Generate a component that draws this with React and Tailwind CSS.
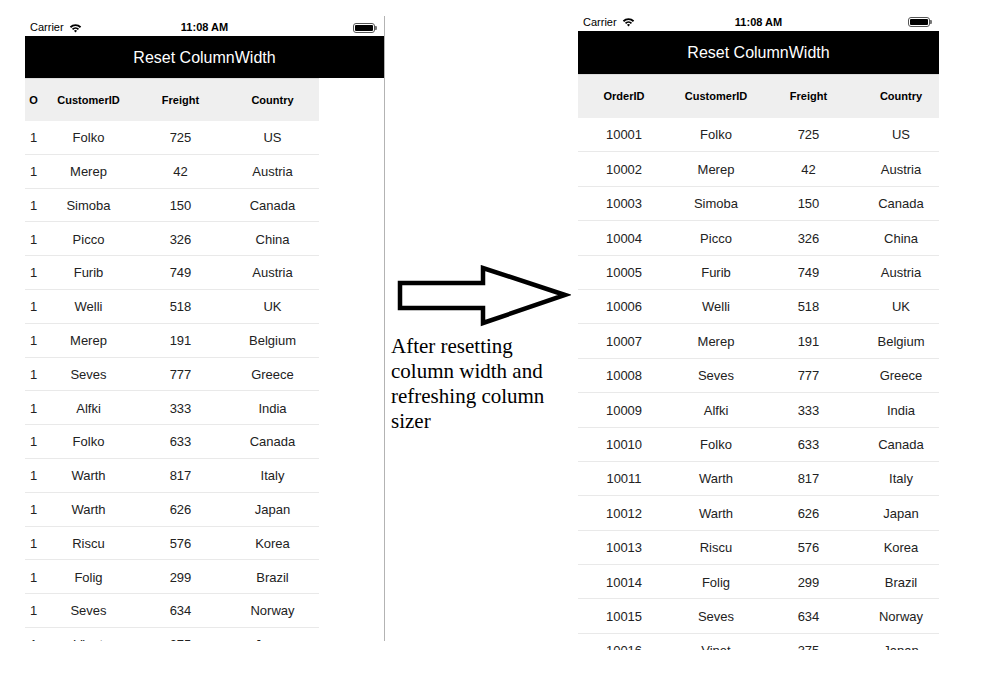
import React from 'react';

const rows = [
  ['10001', 'Folko', '725', 'US'],
  ['10002', 'Merep', '42', 'Austria'],
  ['10003', 'Simoba', '150', 'Canada'],
  ['10004', 'Picco', '326', 'China'],
  ['10005', 'Furib', '749', 'Austria'],
  ['10006', 'Welli', '518', 'UK'],
  ['10007', 'Merep', '191', 'Belgium'],
  ['10008', 'Seves', '777', 'Greece'],
  ['10009', 'Alfki', '333', 'India'],
  ['10010', 'Folko', '633', 'Canada'],
  ['10011', 'Warth', '817', 'Italy'],
  ['10012', 'Warth', '626', 'Japan'],
  ['10013', 'Riscu', '576', 'Korea'],
  ['10014', 'Folig', '299', 'Brazil'],
  ['10015', 'Seves', '634', 'Norway'],
  ['10016', 'Vinet', '375', 'Japan'],
];

const Wifi = () => (
  <svg width="13" height="10" viewBox="0 0 13 10" className="ml-[5px]">
    <path d="M0.8 3.6 A8 8 0 0 1 12.2 3.6 L10.9 4.9 A6.2 6.2 0 0 0 2.1 4.9 Z" fill="#000" />
    <path d="M2.9 5.7 A5 5 0 0 1 10.1 5.7 L8.8 7 A3.2 3.2 0 0 0 4.2 7 Z" fill="#000" />
    <path d="M5 7.8 A2.2 2.2 0 0 1 8 7.8 L6.5 9.4 Z" fill="#000" />
  </svg>
);

const Battery = () => (
  <div className="flex items-center">
    <div className="w-[22px] h-[10px] rounded-[3px] border border-[#555] p-[1px]">
      <div className="w-full h-full bg-black rounded-[1px]" />
    </div>
    <div className="w-[2px] h-[4px] bg-[#777] rounded-r-[1px]" />
  </div>
);

const StatusBar = ({ h }) => (
  <div className={`relative flex items-center justify-between px-[5px] pt-[3px] ${h}`}>
    <div className="flex items-center text-[11px] text-black">
      Carrier
      <Wifi />
    </div>
    <div className="absolute left-0 right-0 text-center text-[11px] font-bold text-black pointer-events-none">11:08 AM</div>
    <div className="pr-[2px]">
      <Battery />
    </div>
  </div>
);

const Phone = ({ left }) => {
  const widths = left ? ['w-[17px]', 'w-[93px]', 'w-[91px]', 'w-[93px]'] : ['w-[92px]', 'w-[92px]', 'w-[93px]', 'w-[92px]'];
  const headers = left ? ['O', 'CustomerID', 'Freight', 'Country'] : ['OrderID', 'CustomerID', 'Freight', 'Country'];
  const rowH = left ? 'h-[33.8px]' : 'h-[34.4px]';
  return (
    <div className="flex flex-col">
      <StatusBar h={left ? 'h-[20px]' : 'h-[21px]'} />
      <div className={`bg-black text-white flex items-center justify-center text-[16px] ${left ? 'h-[42px] pt-[2px]' : 'h-[43px]'}`}>
        Reset ColumnWidth
      </div>
      <div className={left ? 'w-[294px]' : 'w-[369px]'}>
        <div className={`flex bg-[#efefef] border-t border-[#dcdcdc] ${left ? 'h-[43px]' : 'h-[44px]'}`}>
          {headers.map((t, i) => (
            <div key={t} className={`${widths[i]} shrink-0 flex items-center justify-center text-[11px] font-bold text-black`}>
              {t}
            </div>
          ))}
        </div>
        {rows.map((r) => (
          <div key={r[0]} className={`flex border-b border-[#e9e9e9] pt-[1px] ${rowH}`}>
            {[left ? '1' : r[0], r[1], r[2], r[3]].map((t, i) => (
              <div key={i} className={`${widths[i]} shrink-0 flex items-center justify-center text-[13px] text-[#222]`}>
                {t}
              </div>
            ))}
          </div>
        ))}
      </div>
    </div>
  );
};

export default function App() {
  return (
    <div className="w-[989px] h-[679px] bg-white flex items-start overflow-hidden" style={{ fontFamily: '"Liberation Sans", Arial, sans-serif' }}>
      <div className="ml-[25px] mt-[16px] w-[360px] h-[625px] overflow-hidden border-r border-[#b3b3b3]">
        <div className="w-[359px]">
          <Phone left />
        </div>
      </div>
      <div className="w-[193px] shrink-0 pt-[265px]">
        <svg width="175" height="62" viewBox="0 0 175 62" className="ml-[11px]">
          <path d="M4 18 L87 18 L87 3 L169 30 L87 58 L87 43 L4 43 Z" fill="none" stroke="#000" strokeWidth="4.5" strokeLinejoin="miter" />
        </svg>
        <div className="ml-[6px] mt-[7px] text-[21px] leading-[25px] text-black" style={{ fontFamily: '"Liberation Serif", "Times New Roman", serif' }}>
          After resetting<br />
          column width and<br />
          refreshing column<br />
          sizer
        </div>
      </div>
      <div className="mt-[10px] w-[361px] h-[640px] overflow-hidden">
        <Phone />
      </div>
    </div>
  );
}
